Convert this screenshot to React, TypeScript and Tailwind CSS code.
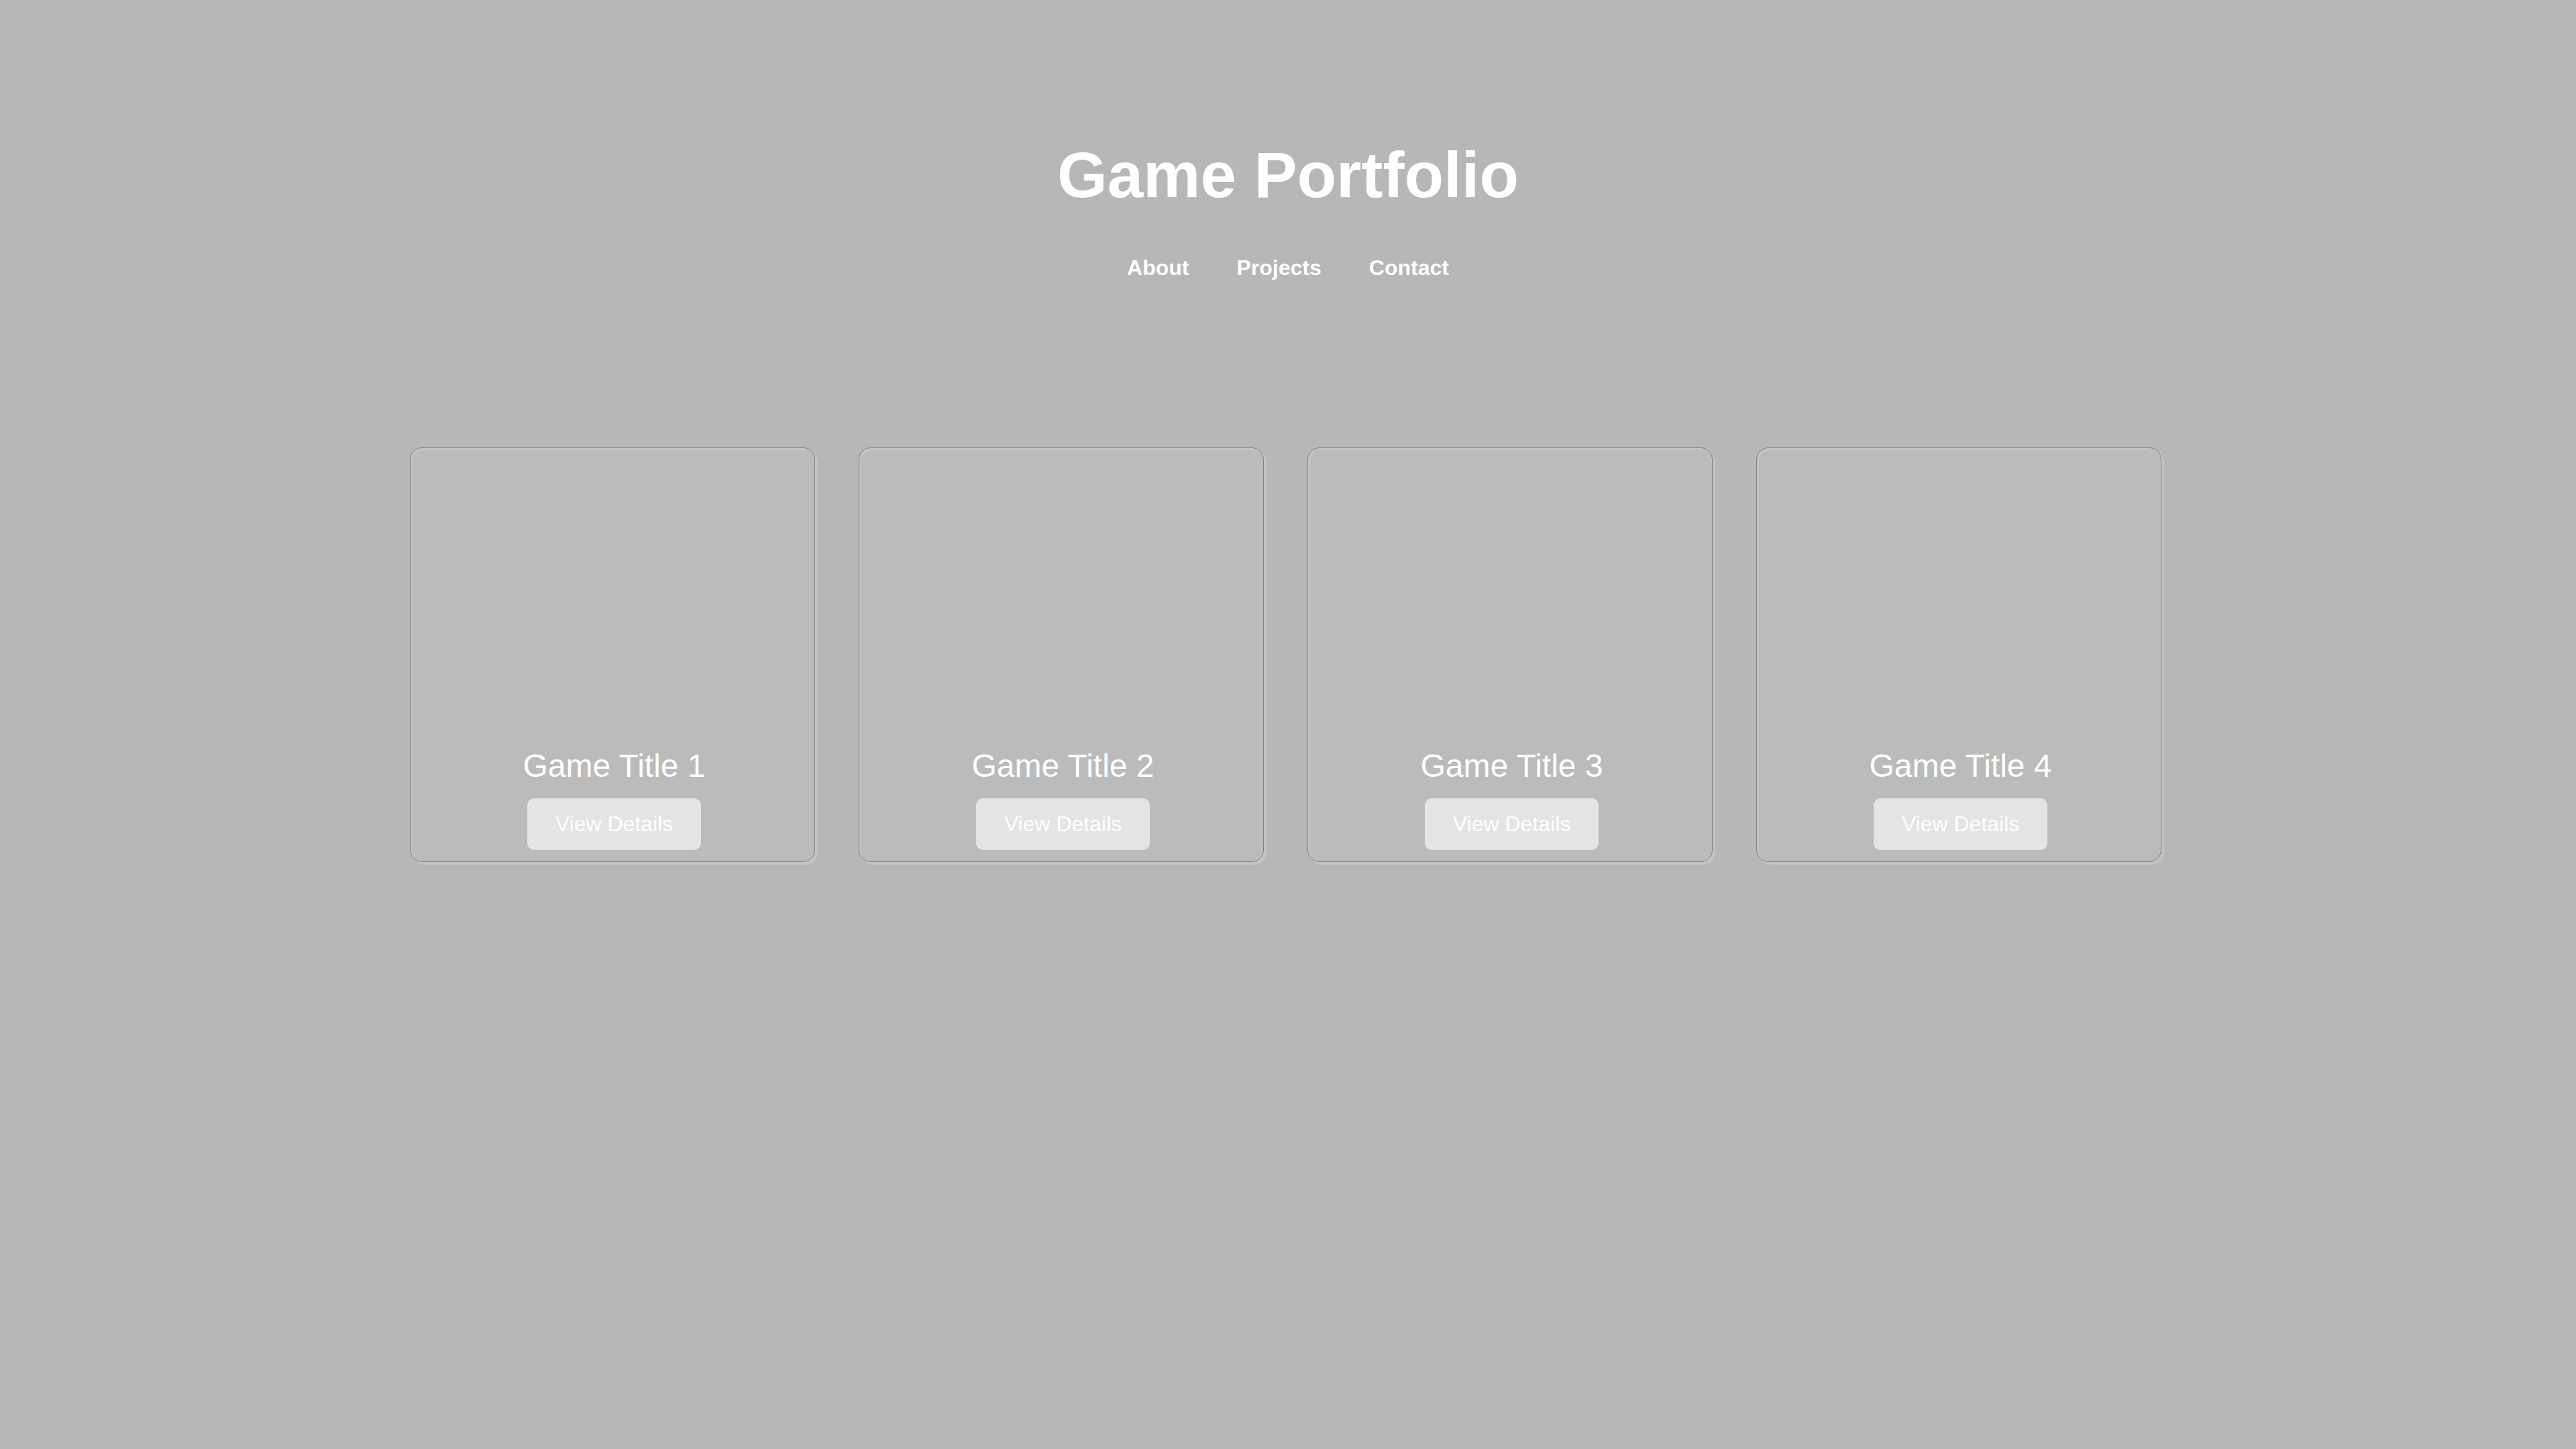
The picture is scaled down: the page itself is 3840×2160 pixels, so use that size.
import React from "react"

const games = [1, 2, 3, 4]

const GameCard = ({ n }: { n: number }) => {
  return (
    <div className="flex h-[618px] w-[604px] flex-col items-center justify-end rounded-[18px] border border-[#808080] bg-[#bbbbbb] pb-[17px] pl-[6px] shadow-[inset_3px_3px_0_#c3c3c3,4px_4px_0_#c3c3c3]">
      <h3 className="mb-[20px] text-[48px] leading-[56px] font-normal text-white">
        Game Title {n}
      </h3>
      <button className="rounded-[10px] bg-[#e4e4e4] px-[42px] py-[20px] text-[32px] leading-[37px] text-white">
        View Details
      </button>
    </div>
  )
}

export default function App() {
  return (
    <div className="min-h-screen w-full bg-[#b7b7b7] font-['Liberation_Sans',Arial,sans-serif]">
      <header className="flex flex-col items-center pt-[213px]">
        <h1 className="text-[96px] leading-[96px] font-bold text-white">Game Portfolio</h1>
        <nav className="mt-[66px] flex gap-[71px] text-[32px] font-bold text-white">
          <a href="#about">About</a>
          <a href="#projects">Projects</a>
          <a href="#contact">Contact</a>
        </nav>
      </header>

      <main className="mt-[244px] flex justify-center gap-[65px] pr-[8px]">
        {games.map((n) => (
          <GameCard key={n} n={n} />
        ))}
      </main>
    </div>
  )
}
